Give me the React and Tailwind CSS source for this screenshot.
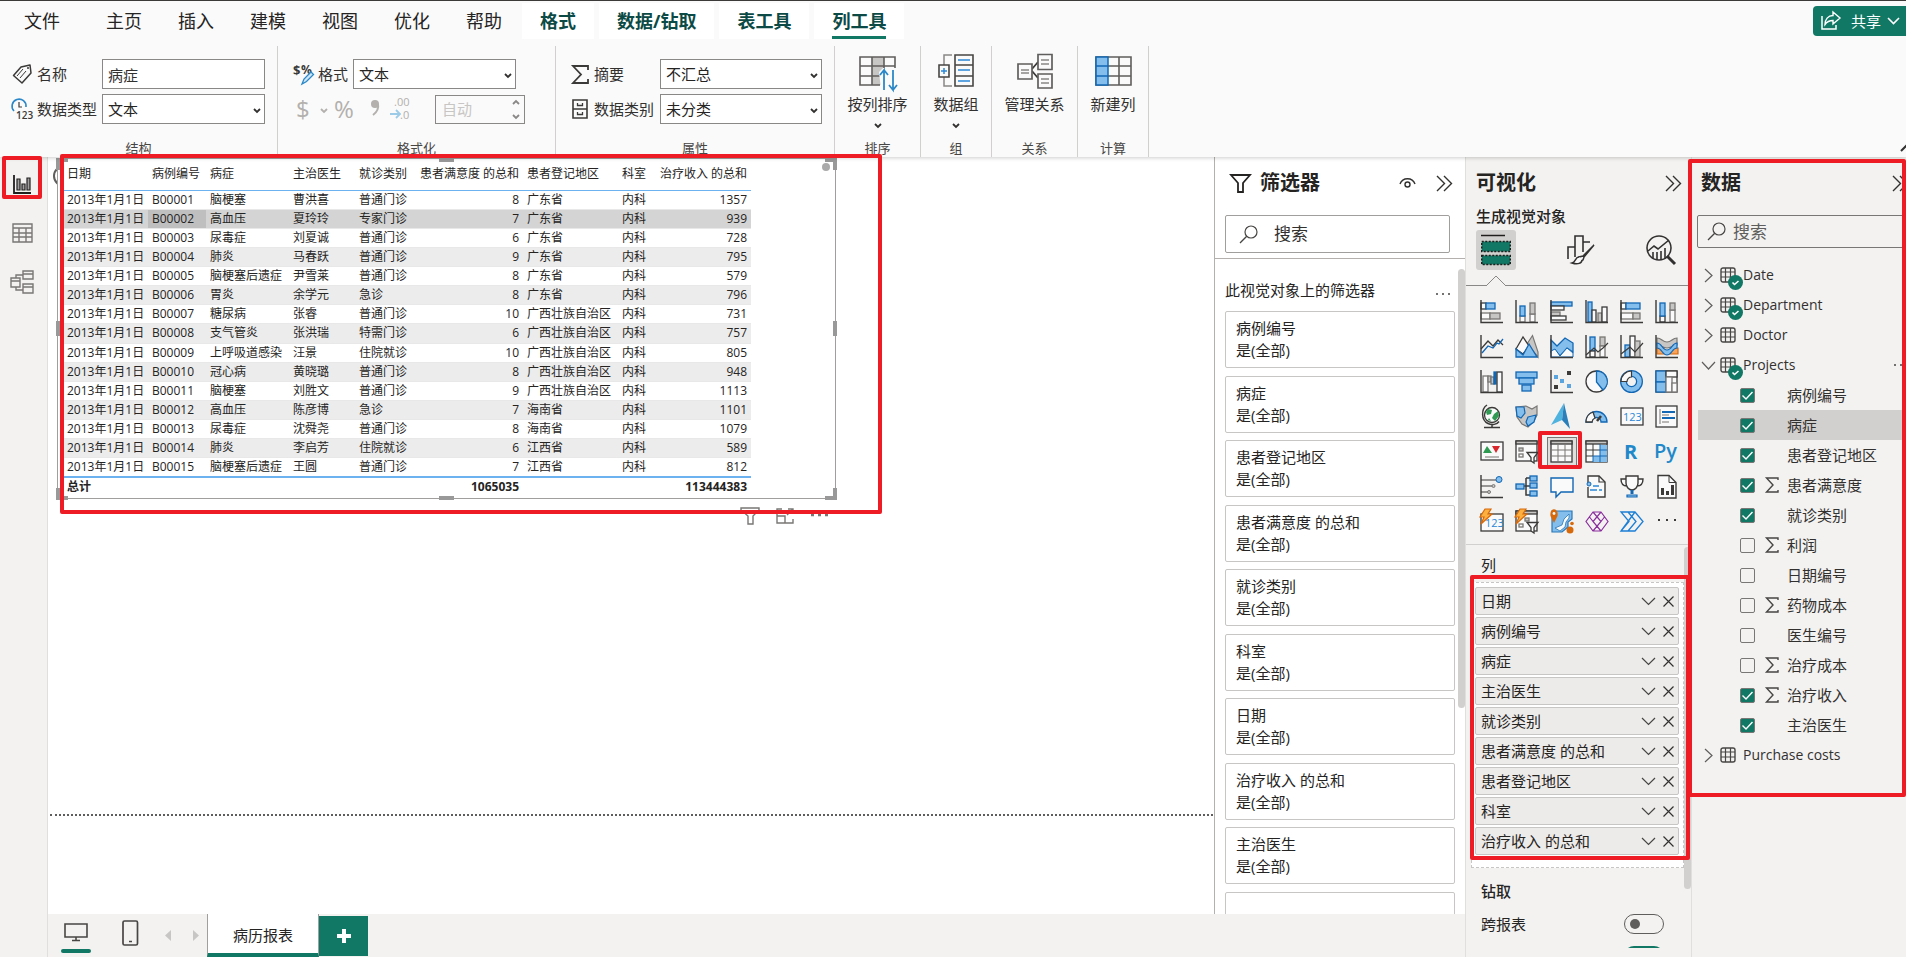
import React, { useState } from "react";

const K = "#3b3a39"; // dark stroke
const B = "#1267b4"; // blue stroke
const L = "#83beec"; // light blue fill
const G = "#c8c6c4"; // grey fill
const S = "#797775"; // grey stroke
const W = "#fafafa";

const menuTabs = ["主页", "插入", "建模", "视图", "优化", "帮助"];
const contextTabs = ["格式", "数据/钻取", "表工具", "列工具"];

const columns = [
    { name: "日期", width: "w-[85px]" },
    { name: "病例编号", width: "w-[58px]" },
    { name: "病症", width: "w-[83px]" },
    { name: "主治医生", width: "w-[66px]" },
    { name: "就诊类别", width: "w-[58px]" },
    { name: "患者满意度 的总和", width: "w-[110px]", number: true },
    { name: "患者登记地区", width: "w-[95px]" },
    { name: "科室", width: "w-[34px]" },
    { name: "治疗收入 的总和", width: "w-[99px]", number: true },
];

const records = [
    ["B00001", "脑梗塞", "曹洪喜", "普通门诊", 8, "广东省", 1357],
    ["B00002", "高血压", "夏玲玲", "专家门诊", 7, "广东省", 939],
    ["B00003", "尿毒症", "刘夏诚", "普通门诊", 6, "广东省", 728],
    ["B00004", "肺炎", "马春跃", "普通门诊", 9, "广东省", 795],
    ["B00005", "脑梗塞后遗症", "尹雪莱", "普通门诊", 8, "广东省", 579],
    ["B00006", "胃炎", "余学元", "急诊", 8, "广东省", 796],
    ["B00007", "糖尿病", "张睿", "普通门诊", 10, "广西壮族自治区", 731],
    ["B00008", "支气管炎", "张洪瑞", "特需门诊", 6, "广西壮族自治区", 757],
    ["B00009", "上呼吸道感染", "汪景", "住院就诊", 10, "广西壮族自治区", 805],
    ["B00010", "冠心病", "黄晓璐", "普通门诊", 8, "广西壮族自治区", 948],
    ["B00011", "脑梗塞", "刘胜文", "普通门诊", 9, "广西壮族自治区", 1113],
    ["B00012", "高血压", "陈彦博", "急诊", 7, "海南省", 1101],
    ["B00013", "尿毒症", "沈舜尧", "普通门诊", 8, "海南省", 1079],
    ["B00014", "肺炎", "李启芳", "住院就诊", 6, "江西省", 589],
    ["B00015", "脑梗塞后遗症", "王圆", "普通门诊", 7, "江西省", 812],
];

const filters = ["病例编号", "病症", "患者登记地区", "患者满意度 的总和", "就诊类别", "科室", "日期", "治疗收入 的总和", "主治医生"];

const wellFields = ["日期", "病例编号", "病症", "主治医生", "就诊类别", "患者满意度 的总和", "患者登记地区", "科室", "治疗收入 的总和"];

const projectFields = [
    { name: "病例编号", checked: true },
    { name: "病症", checked: true, selected: true },
    { name: "患者登记地区", checked: true },
    { name: "患者满意度", checked: true, sum: true },
    { name: "就诊类别", checked: true },
    { name: "利润", sum: true },
    { name: "日期编号" },
    { name: "药物成本", sum: true },
    { name: "医生编号" },
    { name: "治疗成本", sum: true },
    { name: "治疗收入", checked: true, sum: true },
    { name: "主治医生", checked: true },
];

const Svg = ({ w = 24, h = 24, className = "", children }) => (
    <svg width={w} height={h} viewBox={`0 0 ${w} ${h}`} fill="none" className={`shrink-0 overflow-visible ${className}`} aria-hidden="true">
        {children}
    </svg>
);

const R = ({ x, y, w, h, f = W, s = K }) => (
    <rect x={x} y={y} width={w} height={h} fill={f} stroke={s} strokeWidth="1.3" />
);

const Axis = () => <path d="M1 0V22.5H23" stroke={K} strokeWidth="1.4" />;

const SmallChevron = ({ className = "" }) => (
    <Svg w={8} h={6} className={className}>
        <path d="M1 1l3 3 3-3" stroke="currentColor" strokeWidth="1.8" />
    </Svg>
);

const WideChevron = () => (
    <Svg w={15} h={9}>
        <path d="M1 1l6.5 6.5L14 1" stroke="#484644" strokeWidth="1.2" />
    </Svg>
);

const DoubleChevron = () => (
    <Svg w={17} h={17}>
        <path d="M1 1l7.5 7.5L1 16M8 1l7.5 7.5L8 16" stroke="#323130" strokeWidth="1.4" />
    </Svg>
);

const SearchIcon = () => (
    <Svg w={19} h={19}>
        <circle cx="12" cy="7" r="6" stroke="#484644" strokeWidth="1.2" />
        <path d="M7.7 11.3L1 18" stroke="#484644" strokeWidth="1.3" />
    </Svg>
);

const MoreDots = ({ className = "" }) => (
    <Svg w={14} h={4} className={className}>
        <path d="M0 2h2M6 2h2M12 2h2" stroke="#484644" strokeWidth="1.5" />
    </Svg>
);

const Sigma = ({ className = "" }) => (
    <Svg w={14} h={16} className={className}>
        <path d="M13 3V1H1.5L8 8l-6.500 7H13v-2" stroke="#484644" strokeWidth="1.4" />
    </Svg>
);

// Red annotation frame, placed over whatever its parent shows
const Mark = ({ className }) => (
    <div className={`absolute z-20 border-4 border-[#ee1c25] rounded-[2px] pointer-events-none ${className}`} />
);

const bolt = <path d="M5 -1h6L8 4h4L1 14l3-7H0z" fill="#fbb040" stroke="#d8690a" strokeWidth="1.2" />;

const slicerFunnel = <path d="M12 12.500h11l-4 5v5.500l-3-2v-3.500z" fill={W} stroke={K} strokeWidth="1.3" />;

const visuals = [
    ["堆积条形图", <><R x={1} y={3} w={5} h={6} /><R x={6} y={3} w={9} h={6} f={L} s={B} /><R x={1} y={13} w={9} h={6} s={S} /><R x={10} y={13} w={10} h={6} f={G} s={S} /><Axis /></>],
    ["堆积柱形图", <><R x={5} y={16} w={5} h={6} s={S} /><R x={5} y={6} w={5} h={10} f={L} s={B} /><R x={15} y={14} w={5} h={8} s={S} /><R x={15} y={3} w={5} h={11} f={G} s={S} /><Axis /></>],
    ["簇状条形图", <><R x={1} y={2} w={21} h={4} f={L} s={B} /><R x={1} y={6} w={13} h={4} /><R x={1} y={12} w={9} h={4} f={G} s={S} /><R x={1} y={16} w={15} h={4} /><Axis /></>],
    ["簇状柱形图", <><R x={3} y={2} w={4} h={20} f={L} s={B} /><R x={7} y={10} w={4} h={12} /><R x={13} y={13} w={4} h={9} f={G} s={S} /><R x={17} y={7} w={5} h={15} /><Axis /></>],
    ["百分比堆积条形图", <><R x={1} y={3} w={5} h={6} /><R x={6} y={3} w={14} h={6} f={L} s={B} /><R x={1} y={13} w={12} h={6} s={S} /><R x={13} y={13} w={7} h={6} f={G} s={S} /><Axis /></>],
    ["百分比堆积柱形图", <><R x={5} y={16} w={5} h={6} /><R x={5} y={3} w={5} h={13} f={L} s={B} /><R x={15} y={10} w={5} h={12} s={S} /><R x={15} y={3} w={5} h={7} f={G} s={S} /><Axis /></>],

    ["折线图", <><path d="M1 14l7-8 5 5 5-6 5 5" stroke={K} strokeWidth="1.3" /><path d="M2 18l6-7 5 2 4-5 2 1 4-5" stroke={B} strokeWidth="1.3" /><Axis /></>],
    ["分区图", <><path d="M12 9l5.500-8.500L23 17v5z" fill={G} stroke={S} strokeWidth="1.2" /><path d="M1 14L8 2l6 9-6 8z" fill={W} stroke={K} strokeWidth="1.3" /><path d="M1 14l7 6 6-11 8 13H1z" fill={L} stroke={B} strokeWidth="1.3" /></>],
    ["堆积面积图", <><path d="M1 5l6 6 8-8 8 5v9l-6-4-7 8-5-6-4 2z" fill={L} stroke={B} strokeWidth="1.3" /><path d="M1 16l4-2 5 7 7-8 6 5v4H1z" fill={W} stroke={B} strokeWidth="1" /><Axis /></>],
    ["折线和堆积柱形图", <><R x={5} y={2} w={5} h={14} f={L} s={B} /><R x={5} y={16} w={5} h={6} /><R x={15} y={2} w={5} h={9} f={G} s={S} /><R x={15} y={11} w={5} h={11} s={S} /><path d="M1 20l8-7 4 4 5-4 5-5" stroke={K} strokeWidth="1.2" /><Axis /></>],
    ["折线和簇状柱形图", <><R x={5} y={10} w={5} h={12} f={L} s={B} /><R x={10} y={1} w={5} h={21} /><R x={15} y={6} w={5} h={16} f={G} s={S} /><path d="M1 19l9-7 5 5 8-9" stroke={K} strokeWidth="1.2" /><Axis /></>],
    ["功能区图表", <><path d="M2 13h6l3 3h5l2-3h5v6H2z" fill="#f7a35c" stroke="#d8690a" strokeWidth="1.2" /><path d="M2 3c5 0 5 4 10 4s5-4 10-4v7c-5 0-5 3-10 3S7 10 2 10z" fill={G} stroke={S} strokeWidth="1.2" /><path d="M2 8c5 0 5 7 10 7s5-7 10-7v5c-5 0-5 7-10 7s-5-7-10-7z" fill={L} stroke={B} strokeWidth="1.2" /><Axis /></>],

    ["瀑布图", <><R x={3} y={6} w={5} h={16} s={S} /><R x={8} y={6} w={3} h={6} f={G} s={S} /><R x={11} y={7} w={3} h={7} f={G} s={S} /><R x={14} y={2} w={2} h={12} f={B} s={B} /><R x={17} y={2} w={5} h={20} /><Axis /></>],
    ["漏斗图", <><R x={1} y={2} w={21} h={6} f={L} s={B} /><R x={4} y={8} w={15} h={6} f={L} s={B} /><R x={7} y={15} w={9} h={6} f={L} s={B} /></>],
    ["散点图", <><path d="M4 5h4v4H4zM10 9h4v4h-4zM17 14h4v4h-4z" fill="#5aa5e0" /><path d="M4 15h4v4H4zM17 1h4v4h-4z" fill={K} /><Axis /></>],
    ["饼图", <><circle cx="11.500" cy="11.500" r="10.500" fill={W} stroke={K} strokeWidth="1.3" /><path d="M11.500 1a10.500 10.500 0 0 1 6.500 19l-6.500-8z" fill={L} stroke={B} strokeWidth="1.3" /></>],
    ["圆环图", <><circle cx="11.500" cy="11.500" r="8" stroke={B} strokeWidth="7" /><circle cx="11.500" cy="11.500" r="8" stroke={L} strokeWidth="4.500" /><path d="M1 11.500A10.500 10.500 0 0 1 11.500 1v6A4.500 4.500 0 0 0 7 11.500z" fill={W} stroke={K} strokeWidth="1.2" /></>],
    ["树状图", <><R x={1} y={1} w={21} h={21} /><R x={1} y={1} w={10} h={11} f={L} s={B} /><R x={1} y={12} w={10} h={10} f={L} s={B} /><R x={11} y={1} w={11} h={6} /><R x={11} y={7} w={6} h={15} s={S} /><R x={17} y={13} w={5} h={9} s={S} /></>],

    ["地图", <><circle cx="12" cy="10" r="7.500" fill={W} stroke={K} strokeWidth="1.3" /><path d="M8 4l4 1-1 4-4 1-1-3zM14 9l4-3 1 5-4 5-3-3zM9 13l2 3-3-1z" fill="#2e9a52" /><path d="M7 0C1 4 1 15 8 18.500c4 2 9 1 11-2M12 19v3M4 22.500h16" stroke={K} strokeWidth="1.500" /></>],
    ["着色地图", <><path d="M1 2l10-1 6 3 5-3v9l-3 6-6 6-6-3-5-7z" fill={G} stroke={S} strokeWidth="1.2" /><path d="M1 2h8l1 6-4 5-4-2zM13 12l8-2-2 7-6 4-2-4z" fill={L} stroke={B} strokeWidth="1.2" /></>],
    ["Azure 地图", <><path d="M14-2L1 20l11-5z" fill="#4fb3e0" /><path d="M14-2l6 26-8-9z" fill="#2a7fba" /></>],
    ["仪表", <><path d="M1 17a10.500 10.500 0 0 1 21 0h-6a4.500 4.500 0 0 0-9 0z" fill={L} stroke={B} strokeWidth="1.3" /><path d="M1 17A10.500 10.500 0 0 1 8 7l2 6a5 5 0 0 0-3 4z" fill={W} stroke={K} strokeWidth="1.3" /><path d="M12 16l4-5" stroke={K} strokeWidth="2.500" /></>],
    ["卡片图", <><R x={1} y={3} w={22} h={17} /><text x="3" y="16" fontSize="11" fill="#2b88d8">123</text></>],
    ["多行卡", <><R x={1} y={1} w={21} h={21} /><path d="M5 4v15M7 10h7M7 17h7" stroke={S} /><path d="M7 7h13M7 13h13" stroke={B} strokeWidth="2" /></>],

    ["KPI", <><R x={1} y={2} w={22} h={18} /><path d="M3 13l4-7 5 7z" fill="#2e9a52" /><path d="M12 6h8l-4 7z" fill="#d8262c" /><path d="M5 17h14" stroke={S} /></>],
    ["切片器", <><R x={1} y={1} w={21} h={20} /><R x={1} y={1} w={21} h={3} f={G} /><R x={4} y={8} w={4} h={3} f={G} s={S} /><R x={4} y={14} w={4} h={3} s={S} />{slicerFunnel}</>],
    ["表", <><R x={1} y={1} w={21} h={21} /><R x={1} y={1} w={21} h={3} f={G} /><path d="M1 10h21M1 16h21M8 4v18M15 4v18" stroke={S} /></>],
    ["矩阵", <><R x={1} y={1} w={21} h={21} /><path d="M15 5h7v17H8v-6h7z" fill={L} /><R x={1} y={1} w={21} h={3} f={G} /><path d="M1 10h14M1 16h7M8 4v12" stroke={K} /><path d="M15 4v18M15 10h7M8 16h14M8 16v6" stroke={B} /></>],
    ["R 脚本", <text x="4" y="19" fontSize="20" fontWeight="700" fill="#2188c9">R</text>],
    ["Python", <text x="-1" y="18" fontSize="20" fontWeight="600" fill="#2188c9">Py</text>],

    ["关键影响者", <><path d="M1 5h16M1 11h11M1 17h7" stroke={S} strokeWidth="1.3" /><circle cx="19" cy="4.500" r="3" fill={L} stroke={B} /><circle cx="13.500" cy="11" r="1.500" fill={G} stroke={S} /><circle cx="9" cy="17" r="1.500" fill={G} stroke={S} /><Axis /></>],
    ["分解树", <><path d="M8 11h10M11 3h6M11 3v17h6" stroke={K} strokeWidth="1.500" /><R x={1} y={9} w={8} h={5} f={L} s={B} /><R x={15} y={1} w={7} h={5} f={L} s={B} /><R x={15} y={8} w={7} h={5} f={L} s={B} /><R x={15} y={16} w={7} h={5} f={L} s={B} /></>],
    ["问答", <path d="M1 3h22v14H11l-5 5v-5H1z" fill={W} stroke={B} strokeWidth="1.4" />],
    ["叙述", <><path d="M3 8V1h11l6 6v15H3V12" fill={W} stroke={K} strokeWidth="1.4" /><path d="M14 1v6h6" stroke={K} strokeWidth="1.2" /><circle cx="4" cy="9" r="2" fill={L} stroke={B} /><path d="M8 11h6M5 15h7M14 15h3" stroke="#2b88d8" strokeWidth="1.3" /></>],
    ["指标", <><path d="M6 1h12v7c0 4-3 7-6 7s-6-3-6-7zM6 4H1c0 5 2 7 6 7M18 4h5c0 5-2 7-6 7" fill={W} stroke={K} strokeWidth="1.4" /><path d="M12 15v4" stroke={B} strokeWidth="3" /><path d="M7 22v-2h10v2z" fill={L} stroke={B} strokeWidth="1.2" /></>],
    ["分页报表", <><path d="M3 0.500h11l7 7V23H3z" fill={W} stroke={K} strokeWidth="1.4" /><path d="M14 0.500v7h7" stroke={K} /><path d="M6 13h3v7H6zM11 16h3v4h-3zM16 10h3v10h-3z" fill={K} /></>],

    ["卡片(新)", <><R x={1} y={4} w={22} h={17} /><text x="5" y="17" fontSize="11" fill="#2b88d8">123</text>{bolt}</>],
    ["切片器(新)", <><R x={1} y={1} w={21} h={20} /><R x={1} y={1} w={21} h={3} f={G} /><R x={4} y={14} w={4} h={3} s={S} /><R x={10} y={8} w={4} h={3} f={G} s={S} />{slicerFunnel}{bolt}</>],
    ["ArcGIS", <><path d="M2 1h20v8l-4 3v5l-6 5H2z" fill={L} stroke="#2b78b8" strokeWidth="1.2" /><path d="M5 18l7-3 2-6 5-5v4l-3 4-1 5-5 4z" fill={W} stroke="#2b78b8" strokeWidth="0.8" /><path d="M4 13L0.500 6C-1-3 9-3 7.500 6z" fill="#d8690a" /><circle cx="4" cy="3.500" r="1.400" fill={W} /><circle cx="20" cy="20" r="3.500" fill="#d8690a" /><circle cx="22" cy="13.500" r="1.800" fill="#d8690a" /></>],
    ["Power Apps", <path d="M8 2h8l7 9.500-7 9.500H8l-7-9.500zM8 2l8 9.500L8 21M16 2L8 11.500 16 21M4.500 7l7.500 9.500M19.500 7L12 16.500" stroke="#8a2f9c" strokeWidth="1.2" />],
    ["Power Automate", <path d="M1 2h14l8 9.500-8 9.500H1l8-9.500zM8 2l8 9.500L8 21M15 2L1 21" stroke="#1c7fd6" strokeWidth="1.3" />],
    ["获取更多视觉对象", <path d="M3 10h2M11 10h2M19 10h2" stroke={K} strokeWidth="2" />],
];

const Combo = ({ id, value, className = "" }) => (
    <div className={`grid h-[30px] ${className}`}>
        <select id={id} className="col-start-1 row-start-1 appearance-none bg-white border border-[#8a8886] pl-[5px] text-[15px] text-[#252423] min-w-0">
            <option>{value}</option>
        </select>
        <SmallChevron className="col-start-1 row-start-1 justify-self-end self-center mr-1 mt-[3px] pointer-events-none" />
    </div>
);

const RibbonGroup = ({ label, className, children }) => (
    <section className={`flex flex-col shrink-0 border-r border-[#d2d0ce] pb-px ${className}`}>
        {children}
        <h2 className="mt-auto text-center text-[13px] leading-4 text-[#484644]">{label}</h2>
    </section>
);

const RibbonButton = ({ label, arrow, children }) => (
    <button className="flex flex-col items-center pt-2 w-full text-[#323130]">
        {children}
        <span className="mt-1 text-[15px] leading-5 whitespace-nowrap">{label}</span>
        {arrow && <SmallChevron className="mt-[9px]" />}
    </button>
);

const Ribbon = () => (
    <div className="flex h-[111px]">
        <RibbonGroup label="结构" className="w-[278px]">
            <div className="pt-[13px] pl-3 grid grid-cols-[25px_65px_163px] gap-y-[5px] items-center text-[15px] text-[#323130]">
                <Svg w={20} h={20}>
                    <path d="M9 3l9-2 1 8-9 10-8.500-7.500z" stroke={K} strokeWidth="1.500" strokeLinejoin="round" />
                    <path d="M5 12l6-7M8 14l6-7" stroke={K} />
                    <circle cx="16" cy="4" r="1" fill={K} />
                </Svg>
                <label htmlFor="field-name">名称</label>
                <input id="field-name" defaultValue="病症" className="h-[30px] bg-white border border-[#8a8886] pl-[5px] min-w-0" />
                <Svg w={22} h={22}>
                    <path d="M2 13A7 7 0 1 1 14 9" stroke="#2b88c8" strokeWidth="1.600" />
                    <path d="M7 4v5h3" stroke={K} strokeWidth="1.200" />
                    <text x="4" y="21" fontSize="10" fontWeight="600" fill={K}>123</text>
                </Svg>
                <label htmlFor="data-type">数据类型</label>
                <Combo id="data-type" value="文本" />
            </div>
        </RibbonGroup>

        <RibbonGroup label="格式化" className="w-[278px]">
            <div className="pt-[13px] pl-[15px] flex items-center text-[15px] text-[#323130]">
                <Svg w={21} h={24}>
                    <text x="0" y="13" fontSize="13" fontWeight="700" fill={K}>$</text>
                    <text x="8" y="12" fontSize="12" fontWeight="700" fill={K}>%</text>
                    <path d="M9 22l2-5 7-7 2.500 2.500-7 7z" fill="#cfe6f7" stroke="#2b88c8" strokeWidth="1.300" />
                </Svg>
                <label htmlFor="format" className="ml-1 w-[35px]">格式</label>
                <Combo id="format" value="文本" className="w-[163px]" />
            </div>
            <div className="mt-[5px] pl-[18px] flex items-center h-[30px] text-[#b3b0ad]">
                <button className="w-[24px] text-left text-[24px] leading-[30px]" aria-label="货币">$</button>
                <SmallChevron className="mt-1" />
                <button className="ml-[6px] w-[30px] text-left text-[24px] leading-[30px]" aria-label="百分比">%</button>
                <button className="ml-[6px] w-[20px]" aria-label="千位分隔符">
                    <Svg w={12} h={20}>
                        <circle cx="5" cy="5" r="4" fill="currentColor" />
                        <path d="M8 5c1 5-1 8-5 11" stroke="currentColor" strokeWidth="2" />
                    </Svg>
                </button>
                <button aria-label="小数位数">
                    <Svg w={22} h={24}>
                        <text x="4" y="9" fontSize="11" fill="currentColor">.00</text>
                        <text x="10" y="22" fontSize="11" fill="currentColor">.0</text>
                        <path d="M0 17h9M6 13l4 4-4 4" stroke="#9ccbe8" strokeWidth="1.800" />
                    </Svg>
                </button>
                <div className="grid ml-[23px] w-[90px] h-[29px]">
                    <input aria-label="小数位" defaultValue="自动" disabled className="col-start-1 row-start-1 min-w-0 border border-[#8a8886] pl-[6px] text-[15px] text-[#c8c6c4]" />
                    <div className="col-start-1 row-start-1 justify-self-end self-center mr-[5px] flex flex-col gap-[9px] text-[#8a8886]">
                        <SmallChevron className="rotate-180" />
                        <SmallChevron />
                    </div>
                </div>
            </div>
        </RibbonGroup>

        <RibbonGroup label="属性" className="w-[279px]">
            <div className="pt-[13px] pl-4 grid grid-cols-[22px_66px_162px] gap-y-[5px] items-center text-[15px] text-[#323130]">
                <Svg w={17} h={19}>
                    <path d="M16 5V1H1l8 8.500L1 18h15v-4" stroke={K} strokeWidth="1.800" />
                </Svg>
                <label htmlFor="summarize">摘要</label>
                <Combo id="summarize" value="不汇总" />
                <Svg w={17} h={20}>
                    <path d="M1 1h14v18H1zM1 10h14" stroke={K} strokeWidth="1.600" />
                    <path d="M5.500 4v2.500h5V4M5.500 13v2.500h5V13" stroke={K} strokeWidth="1.300" />
                </Svg>
                <label htmlFor="category">数据类别</label>
                <Combo id="category" value="未分类" />
            </div>
        </RibbonGroup>

        <RibbonGroup label="排序" className="w-[86px]">
            <RibbonButton label="按列排序" arrow>
                <Svg w={38} h={36}>
                    <path d="M1 3h35v28H1z" fill={W} />
                    <path d="M13 3h12v28H13z" fill={G} />
                    <path d="M21 31H1V3h35v13M1 12h35M1 22h20M13 3v28M25 3v12" stroke="#605e5c" strokeWidth="1.600" />
                    <path d="M20 18l4-4h14v22H22z" fill={W} />
                    <path d="M25 36V16l-4 5M25 16l4 5M34 16v20l-4-5M34 36l4-5" stroke="#2b88c8" strokeWidth="1.800" />
                </Svg>
            </RibbonButton>
        </RibbonGroup>

        <RibbonGroup label="组" className="w-[71px]">
            <RibbonButton label="数据组" arrow>
                <Svg w={36} h={36}>
                    <path d="M14 1H6v10M6 23v9h8" stroke="#8a8886" strokeWidth="1.500" />
                    <path d="M1 11h10v12H1zM17 1h18v31H17zM17 11h18M17 22h18" fill={W} stroke="#484644" strokeWidth="1.600" />
                    <path d="M3 17h6M6 14v6M20 6h12M20 16h12M20 27h12" stroke="#2b88d8" strokeWidth="1.500" />
                </Svg>
            </RibbonButton>
        </RibbonGroup>

        <RibbonGroup label="关系" className="w-[86px]">
            <RibbonButton label="管理关系">
                <Svg w={36} h={36}>
                    <path d="M15 15l6-7M15 17l6 7" stroke={K} strokeWidth="1.800" />
                    <path d="M1 10h14v15H1zM21 0.500h14v15H21zM21 20h14v14H21z" fill={W} stroke="#605e5c" strokeWidth="1.700" />
                    <path d="M4 16h8M4 19h8M24 6h8M24 10h8M24 25h8M24 29h8" stroke="#8a8886" strokeWidth="1.300" />
                </Svg>
            </RibbonButton>
        </RibbonGroup>

        <RibbonGroup label="计算" className="w-[71px]">
            <RibbonButton label="新建列">
                <Svg w={37} h={36}>
                    <path d="M1 3h35v28H1z" fill={W} />
                    <path d="M13 12h23M13 22h23M24 3v28M1 3h35v28H1z" stroke="#605e5c" strokeWidth="1.600" />
                    <path d="M1 3h12v28H1zM1 12h12M1 22h12" fill={L} stroke={B} strokeWidth="1.500" />
                </Svg>
            </RibbonButton>
        </RibbonGroup>

        <button className="ml-auto mt-auto mb-[5px] -mr-[9px] text-[#323130]" aria-label="折叠功能区">
            <Svg w={15} h={9}>
                <path d="M1 8l6-6 6 6" stroke="currentColor" strokeWidth="2" />
            </Svg>
        </button>
    </div>
);

const TopBar = () => (
    <header className="relative z-10 bg-[#fafafa] border-t border-[#3b3a39] shadow-[0_1px_4px_rgba(0,0,0,0.2)]">
        <div className="flex h-[45px] pt-[2px] text-[18px] text-[#252423]">
            <nav className="flex mr-[2px]">
                <button className="h-[36px] px-6 mr-1">文件</button>
                {menuTabs.map((tab) => (
                    <button key={tab} className="h-[36px] w-[72px]">{tab}</button>
                ))}
            </nav>
            <nav className="flex gap-[5px]">
                {contextTabs.map((tab) => (
                    <button key={tab} className="h-[36px] px-[18px] bg-white font-bold text-[#0c4a45]">
                        <span className={`flex items-center h-full border-[#117865] ${tab === "列工具" ? "border-b-3 pt-[3px]" : ""}`}>{tab}</span>
                    </button>
                ))}
            </nav>
            <button className="ml-auto mt-[3px] h-[30px] w-[93px] pl-2 flex items-center bg-[#117865] text-white text-[15px] rounded-l">
                <Svg w={20} h={20}>
                    <path d="M1 5v13h14v-4" stroke="white" strokeWidth="1.500" />
                    <path d="M12 1l7 6-7 6V9.500c-3 0-6 1-8 4 0-5 3-9 8-9z" stroke="white" strokeWidth="1.400" />
                </Svg>
                <span className="ml-[10px]">共享</span>
                <Svg w={13} h={8} className="ml-[6px]">
                    <path d="M1 1l5.500 5.500L12 1" stroke="white" strokeWidth="1.600" />
                </Svg>
            </button>
        </div>
        <Ribbon />
    </header>
);

const ViewRail = () => (
    <nav className="w-12 shrink-0 bg-[#f3f2f1] border-r border-[#e1dfdd] flex flex-col">
        <div className="relative">
            <button className="w-full h-[52px] flex justify-center items-center pt-[2px] pr-[3px]" aria-label="报表视图">
                <Svg w={19} h={19}>
                    <path d="M1 0v18h17" stroke="#201f1e" strokeWidth="1.800" />
                    <path d="M4 4h3v11H4zM9 9h3v6H9zM14 3h3v12h-3z" fill="#a19f9d" stroke="#201f1e" strokeWidth="1.200" />
                </Svg>
            </button>
            <Mark className="left-[2px] -top-[1px] w-[40px] h-[43px]" />
        </div>
        <button className="h-[48px] flex justify-center items-center pr-[3px]" aria-label="数据视图">
            <Svg w={21} h={20}>
                <path d="M1 1h19v18H1zM1 5h19M1 10h19M1 14h19M7 5v14M14 5v14" stroke="#797775" strokeWidth="1.400" />
            </Svg>
        </button>
        <button className="h-[50px] flex justify-center items-center pr-[3px]" aria-label="模型视图">
            <Svg w={24} h={24}>
                <path d="M1 8h9v9H1zM1 11h9M13 1h10v8H13zM13 4h10M13 14h10v9H13zM13 17h10M6 8V5h7M6 17v3h7" stroke="#797775" strokeWidth="1.400" />
            </Svg>
        </button>
    </nav>
);

const RecordTable = () => (
    <table className="table-fixed w-[688px] h-[337px] text-[12px] leading-4 text-[#252423] whitespace-nowrap">
        <thead>
            <tr className="h-[31px] border-b border-[#6cb2f0]">
                {columns.map((col) => (
                    <th key={col.name} className={`px-1 font-normal ${col.width} ${col.number ? "text-right" : "text-left"}`}>{col.name}</th>
                ))}
            </tr>
        </thead>
        <tbody>
            {records.map(([id, disease, doctor, visit, score, region, income], i) => (
                <tr key={id} className={`h-[19px] border-b border-[#e8e8e8] ${i === 1 ? "bg-[#d4d4d4]" : "even:bg-[#ececec]"}`}>
                    <td className="px-1">2013年1月1日</td>
                    <td className={`px-1 ${i === 1 ? "bg-[#bfbfbf]" : ""}`}>{id}</td>
                    <td className="px-1">{disease}</td>
                    <td className="px-1">{doctor}</td>
                    <td className="px-1">{visit}</td>
                    <td className="px-1 text-right">{score}</td>
                    <td className="px-1">{region}</td>
                    <td className="px-1">内科</td>
                    <td className="px-1 text-right">{income}</td>
                </tr>
            ))}
        </tbody>
        <tfoot>
            <tr className="h-[19px] border-t-2 border-[#6cb2f0] font-bold">
                <td className="px-1" colSpan={5}>总计</td>
                <td className="px-1 text-right">1065035</td>
                <td colSpan={2}></td>
                <td className="px-1 text-right">113444383</td>
            </tr>
        </tfoot>
    </table>
);

const Canvas = () => (
    <main className="relative flex-1 min-w-0 bg-white">
        <div className="absolute left-[5px] top-[8px] size-[22px] rounded-full border-2 border-[#605e5c]" />
        <div className="absolute left-[9px] top-[1px] w-[779px] h-[341px] bg-white border border-[#a19f9d] pl-[5px]">
            <RecordTable />
            {/* resize handles */}
            <i className="absolute -left-[2px] -top-[1px] w-3 h-3 border-l-4 border-t-4 border-[#999]" />
            <i className="absolute -right-[2px] -top-[1px] w-3 h-3 border-r-4 border-t-4 border-[#999]" />
            <i className="absolute -left-[2px] -bottom-[2px] w-3 h-3 border-l-4 border-b-4 border-[#999]" />
            <i className="absolute -right-[2px] -bottom-[2px] w-3 h-3 border-r-4 border-b-4 border-[#999]" />
            <i className="absolute left-[381px] -top-[1px] w-[15px] h-1 bg-[#999]" />
            <i className="absolute left-[381px] -bottom-[2px] w-[15px] h-1 bg-[#999]" />
            <i className="absolute -left-[2px] top-[162px] w-1 h-[15px] bg-[#999]" />
            <i className="absolute -right-[2px] top-[162px] w-1 h-[15px] bg-[#999]" />
            <i className="absolute right-[5px] top-[4px] size-[8px] rounded-full bg-[#aaa]" />
            <div className="absolute right-[5px] top-[348px] flex items-center gap-4">
                <Svg w={20} h={18}>
                    <path d="M1 1h18v2l-6 6v8H8V9L1 3z" stroke="#797775" strokeWidth="1.400" />
                </Svg>
                <Svg w={18} h={18}>
                    <path d="M6 2H1v14h16v-4M1 9h8v7M12 2h5v5M17 2l-6 6" stroke="#797775" strokeWidth="1.400" />
                </Svg>
                <Svg w={20} h={18}>
                    <path d="M1 8h3M8 8h3M15 8h3" stroke="#797775" strokeWidth="2.500" />
                </Svg>
            </div>
            <Mark className="left-[2px] -top-[5px] w-[822px] h-[360px]" />
        </div>
        <div className="absolute left-[2px] right-[1px] top-[657px] border-t-2 border-dotted border-[#605e5c]" />
    </main>
);

const FiltersPane = () => (
    <aside className="relative w-[251px] shrink-0 bg-white border-l border-[#b3b0ad] overflow-hidden text-[#252423]">
        <div className="pt-4 pl-[15px] pr-[12px] flex items-center leading-5">
            <Svg w={21} h={19}>
                <path d="M1 1h19l-7 8v9H8V9z" stroke="#252423" strokeWidth="1.800" />
            </Svg>
            <h2 className="ml-[9px] text-[20px] font-bold">筛选器</h2>
            <Svg w={17} h={12} className="ml-auto mr-5">
                <path d="M1 7a8 8 0 0 1 15 0" stroke="#323130" strokeWidth="1.400" />
                <circle cx="8.500" cy="7.500" r="2.500" stroke="#323130" strokeWidth="1.400" />
            </Svg>
            <DoubleChevron />
        </div>
        <label className="mt-[22px] ml-[10px] mr-[15px] h-[38px] flex items-center border border-[#a19f9d] rounded-[2px] pl-[13px]">
            <SearchIcon />
            <input type="search" aria-label="搜索筛选器" placeholder="搜索" className="ml-4 w-full min-w-0 text-[17px] placeholder:text-[#323130]" />
        </label>
        <div className="mt-[5px] border-t border-[#b3b0ad] pt-[21px] pl-[10px] pr-[10px] text-[15px]">
            <div className="flex justify-between items-end leading-5">
                <h3>此视觉对象上的筛选器</h3>
                <MoreDots className="mr-[5px] mb-1" />
            </div>
            <ul className="mt-[11px]">
                {filters.map((name) => (
                    <li key={name} className="h-[57px] odd:mb-2 even:mb-[7px] border border-[#c8c6c4] rounded-[2px] pl-[10px] pt-[5px] leading-[22px]">
                        <p>{name}</p>
                        <p>是(全部)</p>
                    </li>
                ))}
                <li className="h-[57px] border border-[#c8c6c4] rounded-[2px] pt-[17px] leading-[22px] text-center">在此处添加数据字段</li>
            </ul>
        </div>
        <div className="absolute right-0 top-[112px] w-[7px] h-[439px] rounded-full bg-[#d2d0ce]" />
    </aside>
);

const PageTabs = () => (
    <footer className="h-[43px] shrink-0 bg-[#f3f2f1] flex">
        <button className="ml-[13px] w-[30px] flex flex-col items-center pt-[9px]" aria-label="桌面布局">
            <Svg w={24} h={19}>
                <path d="M1 1h22v13H1zM12 14v3M8 17.500h8" stroke="#484644" strokeWidth="1.600" />
            </Svg>
            <span className="mt-[7px] w-[30px] h-1 rounded-full bg-[#117865]" />
        </button>
        <button className="ml-[31px] flex items-start pt-[6px]" aria-label="移动布局">
            <Svg w={17} h={26}>
                <rect x="1" y="1" width="14.500" height="24" rx="1.500" stroke="#484644" strokeWidth="1.700" />
                <path d="M7 21.500h3" stroke="#484644" strokeWidth="1.500" />
            </Svg>
        </button>
        <button className="ml-[26px]" aria-label="上一页"><Svg w={6} h={11}><path d="M6 0v11L0 5.500z" fill="#c8c6c4" /></Svg></button>
        <button className="ml-[22px]" aria-label="下一页"><Svg w={6} h={11}><path d="M0 0v11l6-5.500z" fill="#c8c6c4" /></Svg></button>
        <button className="ml-2 w-[112px] bg-white border-x border-b-4 border-x-[#a19f9d] border-b-[#117865] text-[15px] text-[#252423] pt-1">病历报表</button>
        <button className="mt-[2px] mb-[1px] w-[49px] bg-[#117865] flex items-center justify-center" aria-label="新建页">
            <Svg w={14} h={14}><path d="M7 0v14M0 7h14" stroke="white" strokeWidth="4" /></Svg>
        </button>
    </footer>
);

const VisualsPane = () => {
    const [fields, setFields] = useState(wellFields);

    return (
        <aside className="relative w-[226px] shrink-0 bg-[#f3f2f1] border-l border-[#e1dfdd] text-[#252423] text-[15px]">
            <div className="pt-4 pl-[10px] pr-[9px] flex items-center justify-between leading-5">
                <h2 className="text-[20px] font-bold">可视化</h2>
                <DoubleChevron />
            </div>
            <h3 className="mt-[13px] pl-[10px] leading-5 font-medium">生成视觉对象</h3>
            <div className="mt-1 pl-[10px] pr-[14px] h-[40px] flex items-center justify-between">
                <button className="size-[40px] bg-[#d2d0ce] rounded-[3px] flex items-center justify-center" aria-label="生成视觉对象">
                    <Svg w={30} h={32}>
                        <path d="M0 1.500h24" stroke="#201f1e" strokeWidth="1.500" />
                        <path d="M0.750 7.500h28.500v10H0.750zM0.750 21.500h28.500v9H0.750z" fill="#117865" stroke="#201f1e" strokeWidth="1.500" strokeDasharray="2 1.500" />
                    </Svg>
                </button>
                <button aria-label="设置视觉对象格式">
                    <Svg w={28} h={30}>
                        <path d="M1 24V12h7M8 22V1h8v16M16 7h7" stroke="#323130" strokeWidth="1.600" />
                        <path d="M27 10L16 21l-4 1-1 2 2 2 3-1 1-3z" fill={W} stroke="#323130" strokeWidth="1.500" />
                        <path d="M12 22c-4 0-3 5-7 6 6 2 10 0 10-3" fill={W} stroke="#323130" strokeWidth="1.500" />
                    </Svg>
                </button>
                <button aria-label="分析">
                    <Svg w={31} h={31}>
                        <circle cx="13" cy="13" r="12" stroke="#323130" strokeWidth="1.600" />
                        <path d="M2 16l6-5 4 3 11-9M7 23v-6M11 25v-8M15 25v-9M19 23V13" stroke="#323130" strokeWidth="1.600" />
                        <path d="M21 21l8 8" stroke="#323130" strokeWidth="3" />
                    </Svg>
                </button>
            </div>
            <div className="relative h-4 border-b border-[#8a8886]">
                <Svg w={22} h={11} className="absolute left-[19px] -bottom-[1px]">
                    <path d="M1 11l10-10 10 10" fill="#f3f2f1" stroke="#8a8886" />
                </Svg>
            </div>
            <div className="mt-2 ml-2 grid grid-cols-[repeat(6,35px)] auto-rows-[35px]">
                {visuals.map(([name, icon]) => (
                    <div key={name} className="relative flex items-center justify-center">
                        <button title={name} className={`size-[30px] flex items-center justify-center ${name === "表" ? "bg-[#e1dfdd] border border-[#797775]" : ""}`}>
                            <Svg>{icon}</Svg>
                        </button>
                        {name === "表" && <Mark className="-left-[6px] -top-[3px] w-[44px] h-[38px]" />}
                    </div>
                ))}
            </div>
            <div className="mt-[5px] border-t border-[#d2d0ce] pt-[10px]">
                <h3 className="pl-[15px] leading-5">列</h3>
                <div className="relative mt-[7px] ml-[5px] w-[213px] bg-white border border-dashed border-[#c8c6c4] pt-1 pl-[3px] pr-[4px] pb-3">
                    <ul className="flex flex-col gap-[2px]">
                        {fields.map((name) => (
                            <li key={name} className="h-[28px] flex items-center bg-[#edebe9] border border-[#c8c6c4] rounded-[2px] pl-[5px] pr-1">
                                <span className="mr-auto">{name}</span>
                                <button aria-label={`${name} 选项`}><WideChevron /></button>
                                <button className="ml-[7px]" aria-label={`删除 ${name}`} onClick={() => setFields(fields.filter((f) => f !== name))}>
                                    <Svg w={11} h={11}><path d="M0.500 0.500l10 10M10.500 0.500l-10 10" stroke="#323130" strokeWidth="1.200" /></Svg>
                                </button>
                            </li>
                        ))}
                    </ul>
                    <Mark className="-left-[2px] -top-[8px] w-[220px] h-[285px]" />
                </div>
                <h3 className="mt-[13px] pl-[15px] leading-5 font-medium">钻取</h3>
                <label className="mt-[13px] pl-[15px] pr-[27px] flex justify-between items-center leading-5">
                    跨报表
                    <input
                        type="checkbox"
                        role="switch"
                        className="appearance-none w-[40px] h-[20px] rounded-full border border-[#605e5c] before:content-[''] before:block before:size-[10px] before:m-1 before:ml-[5px] before:rounded-full before:bg-[#605e5c]"
                    />
                </label>
                <div className="mt-3 pr-[27px] h-[2px] overflow-hidden flex justify-end">
                    <input type="checkbox" role="switch" aria-label="保留所有筛选器" defaultChecked className="appearance-none shrink-0 w-[40px] h-[20px] rounded-full bg-[#117865]" />
                </div>
            </div>
            <div className="absolute right-0 top-[390px] w-[7px] h-[342px] rounded-full bg-[#d2d0ce]" />
        </aside>
    );
};

const TableNode = ({ name, used, open, children }) => (
    <li>
        <div className="h-[30px] flex items-center pl-[3px]">
            <button className="w-[15px] flex justify-center" aria-label={name}>
                <Svg w={15} h={15} className={open ? "rotate-90" : ""}>
                    <path d="M4 1l7 6.500L4 14" stroke="#605e5c" strokeWidth="1.200" />
                </Svg>
            </button>
            <span className="relative ml-1 mr-[7px]">
                <Svg w={16} h={16}>
                    <rect x="1" y="1" width="14" height="14" rx="2" stroke="#484644" strokeWidth="1.400" />
                    <path d="M1 5h14M1 10h14M5.500 1v14M10.500 1v14" stroke="#484644" strokeWidth="1.200" />
                </Svg>
                {used && (
                    <Svg w={15} h={15} className="absolute left-[8px] top-[8px]">
                        <circle cx="7.500" cy="7.500" r="7.500" fill="#117865" />
                        <path d="M4.500 7.500l2 2 4-3.500" stroke="white" strokeWidth="1.600" />
                    </Svg>
                )}
            </span>
            <span className="text-sm">{name}</span>
            {open && <MoreDots className="ml-auto -mr-[2px]" />}
        </div>
        {children}
    </li>
);

const DataPane = () => {
    const [checked, setChecked] = useState(projectFields.filter((f) => f.checked).map((f) => f.name));

    const toggle = (name) => {
        setChecked(checked.includes(name) ? checked.filter((n) => n !== name) : [...checked, name]);
    };

    return (
        <aside className="relative w-[215px] shrink-0 bg-[#f3f2f1] border-l border-[#e1dfdd] text-[15px] text-[#323130]">
            <div className="overflow-hidden">
                <div className="pt-4 pl-[9px] -mr-[3px] flex items-center justify-between leading-5">
                    <h2 className="text-[20px] font-bold text-[#252423]">数据</h2>
                    <DoubleChevron />
                </div>
                <label className="mt-[22px] ml-[5px] -mr-1 h-[33px] flex items-center border border-[#797775] rounded-[2px] pl-[9px]">
                    <SearchIcon />
                    <input type="search" aria-label="搜索字段" placeholder="搜索" className="ml-[7px] w-full min-w-0 text-[17px] placeholder:text-[#605e5c]" />
                </label>
                <ul className="mt-3 ml-[6px]">
                    <TableNode name="Date" used />
                    <TableNode name="Department" used />
                    <TableNode name="Doctor" />
                    <TableNode name="Projects" used open>
                        {projectFields.map((field) => (
                            <label key={field.name} className={`h-[30px] flex items-center pl-[42px] ${field.selected ? "bg-[#d2d0ce]" : ""}`}>
                                <span className="grid size-[15px]">
                                    <input
                                        type="checkbox"
                                        checked={checked.includes(field.name)}
                                        onChange={() => toggle(field.name)}
                                        className="col-start-1 row-start-1 appearance-none size-[15px] border border-[#797775] rounded-[2px] checked:bg-[#117865]"
                                    />
                                    {checked.includes(field.name) && (
                                        <Svg w={15} h={15} className="col-start-1 row-start-1 pointer-events-none">
                                            <path d="M2.500 7.500l3.500 3.500 6.500-7" stroke="white" strokeWidth="1.400" />
                                        </Svg>
                                    )}
                                </span>
                                <span className="w-[32px] pl-[10px]">{field.sum && <Sigma />}</span>
                                {field.name}
                            </label>
                        ))}
                    </TableNode>
                    <TableNode name="Purchase costs" />
                </ul>
            </div>
            <Mark className="-left-[4px] right-0 top-[2px] h-[638px]" />
        </aside>
    );
};

const App = () => (
    <div className="h-screen flex flex-col overflow-hidden bg-white font-['Open_Sans','Noto_Sans_CJK_SC',sans-serif]">
        <TopBar />
        <div className="flex flex-1 min-h-0">
            <ViewRail />
            <div className="flex-1 min-w-0 flex flex-col">
                <div className="flex flex-1 min-h-0">
                    <Canvas />
                    <FiltersPane />
                </div>
                <PageTabs />
            </div>
            <VisualsPane />
            <DataPane />
        </div>
    </div>
);

export default App;
